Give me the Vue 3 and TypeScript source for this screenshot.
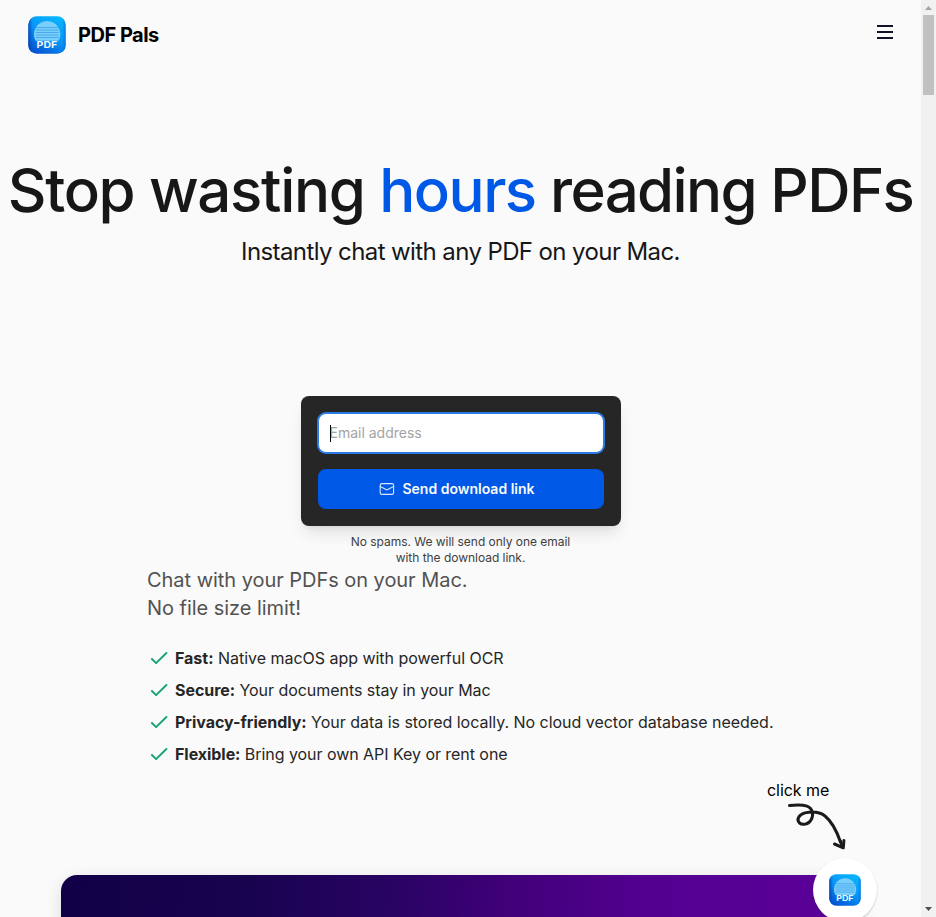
<script setup lang="ts">
import { defineComponent, h, onMounted, ref } from 'vue'

interface Feature {
  label: string
  text: string
}

const email = ref('')
const emailInput = ref<HTMLInputElement | null>(null)

const features: Feature[] = [
  { label: 'Fast:', text: 'Native macOS app with powerful OCR' },
  { label: 'Secure:', text: 'Your documents stay in your Mac' },
  { label: 'Privacy-friendly:', text: 'Your data is stored locally. No cloud vector database needed.' },
  { label: 'Flexible:', text: 'Bring your own API Key or rent one' },
]

const stripes = [11.5, 14, 16.5, 19, 21.5]

const AppLogo = defineComponent({
  props: { uid: { type: String, required: true } },
  setup(props) {
    return () =>
      h('svg', { viewBox: '0 0 38 38', 'aria-hidden': 'true' }, [
        h('defs', [
          h('linearGradient', { id: `${props.uid}-bg`, x1: '0.85', y1: '0', x2: '0.25', y2: '1' }, [
            h('stop', { offset: '0', 'stop-color': '#08b8ff' }),
            h('stop', { offset: '0.5', 'stop-color': '#0797f8' }),
            h('stop', { offset: '1', 'stop-color': '#0453d4' }),
          ]),
          h('linearGradient', { id: `${props.uid}-edge`, x1: '0', y1: '0', x2: '1', y2: '0' }, [
            h('stop', { offset: '0', 'stop-color': '#063a9c', 'stop-opacity': '0.75' }),
            h('stop', { offset: '0.12', 'stop-color': '#0650c8', 'stop-opacity': '0' }),
            h('stop', { offset: '0.9', 'stop-color': '#0650c8', 'stop-opacity': '0' }),
            h('stop', { offset: '1', 'stop-color': '#0650c8', 'stop-opacity': '0.5' }),
          ]),
        ]),
        h('rect', { x: 0.3, y: 0.3, width: 37.4, height: 37.4, rx: 8.5, fill: `url(#${props.uid}-bg)` }),
        h('rect', { x: 0.3, y: 0.3, width: 37.4, height: 37.4, rx: 8.5, fill: `url(#${props.uid}-edge)` }),
        h('path', { d: 'M7.6 24.8A13.2 13.2 0 1 1 30.6 24.8Z', fill: '#78cffb' }),
        ...stripes.map((y) =>
          h('path', { d: `M8 ${y}H30.6`, stroke: '#3e9fe8', 'stroke-width': 0.8, fill: 'none' }),
        ),
        h(
          'text',
          {
            x: 8.6,
            y: 32.2,
            'font-family': 'Inter, sans-serif',
            'font-size': 9.4,
            'font-weight': 700,
            textLength: 20.6,
            lengthAdjust: 'spacingAndGlyphs',
            fill: '#eef9ff',
          },
          'PDF',
        ),
      ])
  },
})

onMounted(() => emailInput.value?.focus({ preventScroll: true }))
</script>

<template>
  <div class="viewport">
    <div class="page">
      <header class="header">
        <a class="brand">
          <AppLogo class="brand-logo" uid="brand" />
          <span class="brand-name">PDF Pals</span>
        </a>
        <button class="menu" type="button" aria-label="Menu">
          <svg viewBox="0 0 24 24" width="24" height="24">
            <path d="M4 6h16M4 12h16M4 18h16" fill="none" stroke="#111127" stroke-width="2" />
          </svg>
        </button>
      </header>

      <main>
        <section class="hero">
          <h1 class="title"><span class="title-start">Stop wasting </span><span class="accent">hours</span><span class="title-end"> reading PDFs</span></h1>
          <p class="subtitle">Instantly chat with any PDF on your Mac.</p>
        </section>

        <section class="signup">
          <form class="card" @submit.prevent>
            <div class="field">
              <span v-if="!email" class="caret"></span>
              <input ref="emailInput" v-model="email" class="input" type="email" placeholder="Email address" />
            </div>
            <button class="submit" type="submit">
              <svg class="mail" viewBox="0 0 16 16" width="16" height="16">
                <rect x="1.2" y="2.6" width="13.4" height="10.8" rx="1.7" />
                <path d="M1.2 4.900v.5L7 8.600q.9.500 1.800 0l5.800-3.200v-.5" />
              </svg>
              <span>Send download link</span>
            </button>
          </form>
          <p class="note">No spams. We will send only one email with the download link.</p>
        </section>

        <section class="details">
          <p class="lead">Chat with your PDFs on your Mac.<br />No file size limit!</p>
          <ul class="features">
            <li v-for="f in features" :key="f.label" class="feature">
              <svg class="check" viewBox="0 0 24 24" width="24" height="24">
                <path d="M4.900 13l4.200 4.100L19.400 7" />
              </svg>
              <span><strong>{{ f.label }}</strong> {{ f.text }}</span>
            </li>
          </ul>
        </section>

        <div class="banner"></div>
      </main>
    </div>

    <aside class="chat">
      <span class="chat-label">click me</span>
      <svg class="chat-arrow" viewBox="0 0 62 50" width="62" height="50">
        <path d="M3.500 3.500C10 2.800 16 2.300 21 4.200C27 6.500 28 13 25 18C22.500 22.500 16.500 23.500 13.500 21C10 17.500 13 12.500 19 10.900C26 9.500 34 10.200 39 14C46.500 20 51 30 54.500 40" />
        <path d="M48.500 42L57.300 45.800L57.900 38.500" />
        <path d="M54.300 39L56.200 44" />
      </svg>
      <button class="bubble" type="button" aria-label="Chat">
        <AppLogo class="bubble-logo" uid="bubble" />
      </button>
    </aside>

    <div class="scrollbar">
      <svg viewBox="0 0 15 15" width="15" height="15"><path d="M4 10L7.500 6L11 10Z" fill="#a3a3a3" /></svg>
      <div class="thumb"></div>
      <svg class="down" viewBox="0 0 15 15" width="15" height="15"><path d="M4 5L7.500 9L11 5Z" fill="#505050" /></svg>
    </div>
  </div>
</template>

<style>
html,
body {
  background: #fafafa;
  overflow: hidden;
}
</style>

<style scoped>
.viewport {
  position: relative;
  display: flex;
  height: 917px;
  overflow: hidden;
  font-family: Inter, sans-serif;
  color: #171717;
  background: #fafafa;
}
.page {
  flex: 1;
  min-width: 0;
}
button {
  border: 0;
  padding: 0;
  font-family: inherit;
}
p,
h1,
ul {
  margin: 0;
  padding: 0;
}
.header {
  display: flex;
  justify-content: space-between;
  align-items: flex-start;
  height: 70px;
  box-sizing: border-box;
  padding: 16px 24px 0 28px;
}
.brand {
  display: flex;
  align-items: center;
  gap: 12px;
}
.brand-logo {
  width: 38px;
  height: 38px;
}
.brand-name {
  font-size: 20px;
  line-height: 28px;
  font-weight: 700;
  letter-spacing: -0.5px;
  color: #000;
}
.menu {
  display: flex;
  margin-top: 4px;
  background: none;
}
.hero {
  padding-top: 90px;
  text-align: center;
}
.title {
  font-size: 60px;
  line-height: 60px;
  font-weight: 500;
  letter-spacing: -1.5px;
  white-space: nowrap;
}
.title-start {
  letter-spacing: -1.33px;
}
.title-end {
  letter-spacing: -1.64px;
}
.accent {
  color: #0059e6;
}
.subtitle {
  margin-top: 16px;
  font-size: 24px;
  line-height: 32px;
  letter-spacing: -0.6px;
}
.signup {
  display: flex;
  flex-direction: column;
  align-items: center;
  padding-top: 128px;
}
.card {
  display: flex;
  flex-direction: column;
  gap: 16px;
  width: 320px;
  height: 130px;
  box-sizing: border-box;
  padding: 17px;
  border-radius: 8px;
  background: #262626;
  box-shadow: 0 10px 15px -3px rgba(0, 0, 0, 0.1), 0 4px 6px -4px rgba(0, 0, 0, 0.1);
}
.field {
  position: relative;
  height: 40px;
}
.caret {
  position: absolute;
  left: 12px;
  top: 12px;
  width: 1px;
  height: 17px;
  background: #000;
}
.input {
  width: 100%;
  height: 40px;
  box-sizing: border-box;
  padding: 0 11px 2px;
  border: 1px solid #2b7be4;
  border-radius: 8px;
  outline: none;
  box-shadow: 0 0 0 1px #2b7be4;
  background: #fff;
  font-family: inherit;
  font-size: 14px;
  caret-color: transparent;
}
.input::placeholder {
  color: #a3a3a3;
}
.submit {
  display: flex;
  align-items: center;
  justify-content: center;
  gap: 7px;
  height: 40px;
  padding-right: 7px;
  border-radius: 8px;
  background: #0059e6;
  color: #fafafa;
  font-size: 14px;
  line-height: 20px;
  font-weight: 600;
}
.mail {
  fill: none;
  stroke: #d8e8ff;
  stroke-width: 1.1;
}
.note {
  width: 224px;
  margin-top: 8px;
  font-size: 12px;
  line-height: 16px;
  letter-spacing: -0.03px;
  text-align: center;
  color: #404040;
}
.details {
  padding-left: 147px;
}
.lead {
  font-size: 20px;
  line-height: 28px;
  letter-spacing: -0.04px;
  color: #525252;
}
.features {
  display: flex;
  flex-direction: column;
  gap: 8px;
  margin-top: 24px;
  list-style: none;
  font-size: 16px;
  line-height: 24px;
  letter-spacing: -0.025px;
  color: #262626;
}
.feature {
  display: flex;
  gap: 4px;
}
.feature:nth-child(even) {
  letter-spacing: -0.05px;
}
.check {
  fill: none;
  stroke: #16a66f;
  stroke-width: 2;
  stroke-linecap: round;
  stroke-linejoin: round;
}
.banner {
  width: 800px;
  height: 100px;
  margin: 109px auto 0;
  border-radius: 16px;
  background: linear-gradient(95deg, #110047 0%, #17034e 22%, #2b0365 43%, #400078 55%, #530090 73%, #5c0099 100%);
  box-shadow: 0 4px 16px rgba(0, 0, 0, 0.12);
}
.chat {
  position: absolute;
  left: 767px;
  top: 778px;
  display: flex;
  flex-direction: column;
  color: #000;
}
.chat-label {
  font-size: 16px;
  line-height: 24px;
  letter-spacing: -0.05px;
}
.chat-arrow {
  margin-left: 19px;
  fill: none;
  stroke: #1b1b1b;
  stroke-width: 3;
  stroke-linecap: round;
  stroke-linejoin: round;
}
.bubble {
  display: flex;
  align-items: center;
  justify-content: center;
  width: 64px;
  height: 64px;
  margin: 6px 0 0 46px;
  border-radius: 50%;
  background: #fff;
  box-shadow: 0 1px 2px rgba(0, 0, 0, 0.2);
}
.bubble-logo {
  width: 32px;
  height: 32px;
}
.scrollbar {
  display: flex;
  flex-direction: column;
  width: 15px;
  background: #f1f1f1;
}
.thumb {
  width: 11px;
  height: 80px;
  margin-left: 2px;
  background: #c1c1c1;
}
.down {
  margin-top: auto;
}
</style>
